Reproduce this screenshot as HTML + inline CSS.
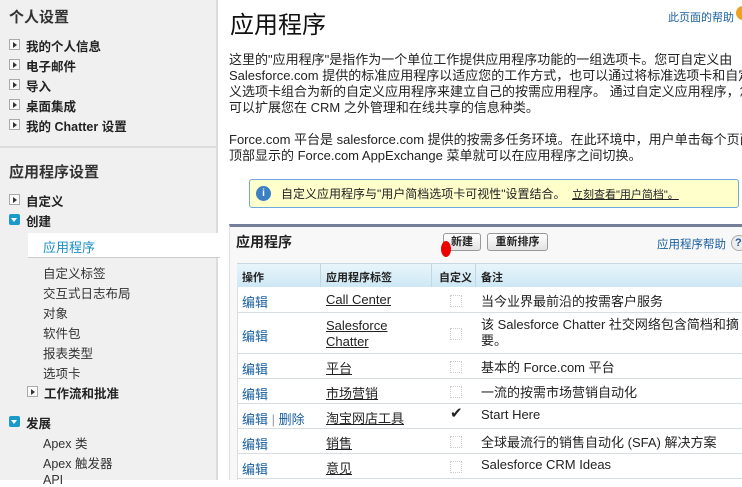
<!DOCTYPE html>
<html><head><meta charset="utf-8"><style>
*{margin:0;padding:0;box-sizing:border-box}
body{width:742px;height:480px;overflow:hidden;background:#fff;font-family:"Liberation Sans","Noto Sans CJK SC",sans-serif;font-size:13px;color:#222;position:relative}
.a{position:absolute;white-space:nowrap}
#side{position:absolute;left:0;top:0;width:218px;height:480px;background:#f0f0f0;border-right:2px solid #dcdcdc}
.h{font-size:15px;color:#333;font-weight:bold}
.b{font-weight:bold;color:#222;font-size:12.5px}
.tri{position:absolute;width:11px;height:11px;border:1px solid #aaa;background:#fafafa}
.tri:after{content:"";position:absolute;left:3px;top:2px;border-left:4px solid #333;border-top:3px solid transparent;border-bottom:3px solid transparent}
.dn{position:absolute;width:11px;height:11px;background:#1a9ac9;border-radius:2px}
.dn:after{content:"";position:absolute;left:2px;top:4px;border-top:4px solid #fff;border-left:3.5px solid transparent;border-right:3.5px solid transparent}
.s{font-size:12.5px;color:#333}
.lnk{color:#1a5fa0}
.u{text-decoration:underline;color:#222}
.cb{position:absolute;width:12px;height:12px;border:1px dotted #ccc}
.hl{position:absolute;left:237px;right:0;height:1px;background:#d8dde2}
</style></head><body>
<div id="side">
<div class="a h" style="left:9px;top:6px">个人设置</div>
<div class="tri" style="left:9px;top:39px"></div><div class="a b" style="left:26px;top:36px">我的个人信息</div>
<div class="tri" style="left:9px;top:59px"></div><div class="a b" style="left:26px;top:56px">电子邮件</div>
<div class="tri" style="left:9px;top:79px"></div><div class="a b" style="left:26px;top:76px">导入</div>
<div class="tri" style="left:9px;top:99px"></div><div class="a b" style="left:26px;top:96px">桌面集成</div>
<div class="tri" style="left:9px;top:119px"></div><div class="a b" style="left:26px;top:116px">我的 Chatter 设置</div>
<div style="position:absolute;left:0;top:146px;width:218px;height:2px;background:#dcdcdc"></div>
<div class="a h" style="left:9px;top:161px">应用程序设置</div>
<div class="tri" style="left:9px;top:194px"></div><div class="a b" style="left:26px;top:191px">自定义</div>
<div class="dn" style="left:9px;top:214px"></div><div class="a b" style="left:26px;top:211px">创建</div>
<div style="position:absolute;left:28px;top:233px;width:192px;height:25px;background:#fff;border-bottom:1px solid #ccc"></div>
<div class="a" style="left:43px;top:237px;color:#1a8fc7;font-size:13px">应用程序</div>
<div class="a s" style="left:43px;top:263px">自定义标签</div>
<div class="a s" style="left:43px;top:283px">交互式日志布局</div>
<div class="a s" style="left:43px;top:303px">对象</div>
<div class="a s" style="left:43px;top:323px">软件包</div>
<div class="a s" style="left:43px;top:343px">报表类型</div>
<div class="a s" style="left:43px;top:363px">选项卡</div>
<div class="tri" style="left:27px;top:386px"></div><div class="a b" style="left:44px;top:383px">工作流和批准</div>
<div class="dn" style="left:9px;top:416px"></div><div class="a b" style="left:26px;top:413px">发展</div>
<div class="a s" style="left:43px;top:433px">Apex 类</div>
<div class="a s" style="left:43px;top:453px">Apex 触发器</div>
<div class="a s" style="left:43px;top:473px">API</div>
</div>
<div class="a" style="left:230px;top:5px;font-size:24px;color:#111">应用程序</div>
<div class="a" style="left:668px;top:9px;font-size:11px;color:#1a5fa0">此页面的帮助</div>
<div style="position:absolute;left:736px;top:6px;width:14px;height:14px;border-radius:50%;background:#f0a020"></div>
<div class="a" style="left:229px;top:52px;line-height:16px;font-size:13px;color:#222">这里的"应用程序"是指作为一个单位工作提供应用程序功能的一组选项卡。您可自定义由<br>Salesforce.com 提供的标准应用程序以适应您的工作方式，也可以通过将标准选项卡和自定<br>义选项卡组合为新的自定义应用程序来建立自己的按需应用程序。 通过自定义应用程序，您<br>可以扩展您在 CRM 之外管理和在线共享的信息种类。</div>
<div class="a" style="left:229px;top:132px;line-height:16px;font-size:13px;color:#222">Force.com 平台是 salesforce.com 提供的按需多任务环境。在此环境中，用户单击每个页面<br>顶部显示的 Force.com AppExchange 菜单就可以在应用程序之间切换。</div>
<div style="position:absolute;left:249px;top:179px;width:490px;height:29px;background:#ffffcc;border:1px solid #6fa8dc;border-radius:3px"></div>
<div style="position:absolute;left:256px;top:186px;width:15px;height:15px;border-radius:50%;background:#3b7fc4;color:#fff;font-size:10px;text-align:center;line-height:15px;font-weight:bold">i</div>
<div class="a" style="left:281px;top:185px;font-size:12px">自定义应用程序与"用户简档选项卡可视性"设置结合。</div>
<div class="a u" style="left:572px;top:186px;font-size:11px">立刻查看"用户简档"。</div>
<div style="position:absolute;left:229px;top:224px;width:513px;height:256px;background:#f8f8f8;border-top:3px solid #747e96;border-left:1px solid #e0e0e0"></div>
<div class="a" style="left:236px;top:232px;font-size:14px;font-weight:bold;color:#222">应用程序</div>
<div style="position:absolute;left:443px;top:233px;width:38px;height:18px;border:1px solid #999;border-radius:3px;background:linear-gradient(#fff,#e2e2e2);font-size:11px;font-weight:bold;text-align:center;line-height:16px">新建</div>
<div style="position:absolute;left:487px;top:233px;width:61px;height:18px;border:1px solid #999;border-radius:3px;background:linear-gradient(#fff,#e2e2e2);font-size:11px;font-weight:bold;text-align:center;line-height:16px">重新排序</div>
<div style="position:absolute;left:441px;top:241px;width:10px;height:16px;background:#e00;border-radius:50%"></div>
<div class="a" style="left:657px;top:236px;font-size:11.5px;color:#1a5fa0">应用程序帮助</div>
<div style="position:absolute;left:731px;top:235px;width:16px;height:16px;border-radius:50%;border:1px solid #aaa;background:#eee;font-size:11px;color:#1a5fa0;line-height:14px;padding-left:3px;font-weight:bold">?</div>
<div style="position:absolute;left:237px;top:263px;width:505px;height:217px;background:#fff;border-left:1px solid #d8dde2"></div>
<div style="position:absolute;left:237px;top:263px;width:505px;height:24px;background:linear-gradient(#e8f5fb,#cde8f4);border-top:1px solid #c8d8e2"></div>
<div style="position:absolute;left:320px;top:264px;width:1px;height:23px;background:#c6d6df"></div>
<div style="position:absolute;left:431px;top:264px;width:1px;height:23px;background:#c6d6df"></div>
<div style="position:absolute;left:475px;top:264px;width:1px;height:23px;background:#c6d6df"></div>
<div class="a" style="left:242px;top:269px;font-size:11px;font-weight:bold">操作</div>
<div class="a" style="left:326px;top:269px;font-size:11px;font-weight:bold">应用程序标签</div>
<div class="a" style="left:439px;top:269px;font-size:11px;font-weight:bold">自定义</div>
<div class="a" style="left:481px;top:269px;font-size:11px;font-weight:bold">备注</div>
<div class="hl" style="top:312px"></div><div class="hl" style="top:353px"></div><div class="hl" style="top:378px"></div><div class="hl" style="top:403px"></div><div class="hl" style="top:428px"></div><div class="hl" style="top:453px"></div><div class="hl" style="top:478px"></div>
<div class="a lnk" style="left:242px;top:292px">编辑</div><div class="a u" style="left:326px;top:292px">Call Center</div><div class="cb" style="left:450px;top:295px"></div><div class="a" style="left:481px;top:291px">当今业界最前沿的按需客户服务</div>
<div class="a lnk" style="left:242px;top:326px">编辑</div><div class="a u" style="left:326px;top:318px;line-height:16px">Salesforce<br>Chatter</div><div class="cb" style="left:450px;top:328px"></div><div class="a" style="left:481px;top:317px;line-height:16px">该 Salesforce Chatter 社交网络包含简档和摘<br>要。</div>
<div class="a lnk" style="left:242px;top:359px">编辑</div><div class="a u" style="left:326px;top:358px">平台</div><div class="cb" style="left:450px;top:361px"></div><div class="a" style="left:481px;top:357px">基本的 Force.com 平台</div>
<div class="a lnk" style="left:242px;top:384px">编辑</div><div class="a u" style="left:326px;top:383px">市场营销</div><div class="cb" style="left:450px;top:386px"></div><div class="a" style="left:481px;top:382px">一流的按需市场营销自动化</div>
<div class="a lnk" style="left:242px;top:409px">编辑 <span style="color:#999">|</span> 删除</div><div class="a u" style="left:326px;top:408px">淘宝网店工具</div><div class="a" style="left:450px;top:404px;font-size:15px">✔</div><div class="a" style="left:481px;top:407px">Start Here</div>
<div class="a lnk" style="left:242px;top:434px">编辑</div><div class="a u" style="left:326px;top:433px">销售</div><div class="cb" style="left:450px;top:436px"></div><div class="a" style="left:481px;top:432px">全球最流行的销售自动化 (SFA) 解决方案</div>
<div class="a lnk" style="left:242px;top:459px">编辑</div><div class="a u" style="left:326px;top:458px">意见</div><div class="cb" style="left:450px;top:461px"></div><div class="a" style="left:481px;top:457px">Salesforce CRM Ideas</div>
</body></html>
